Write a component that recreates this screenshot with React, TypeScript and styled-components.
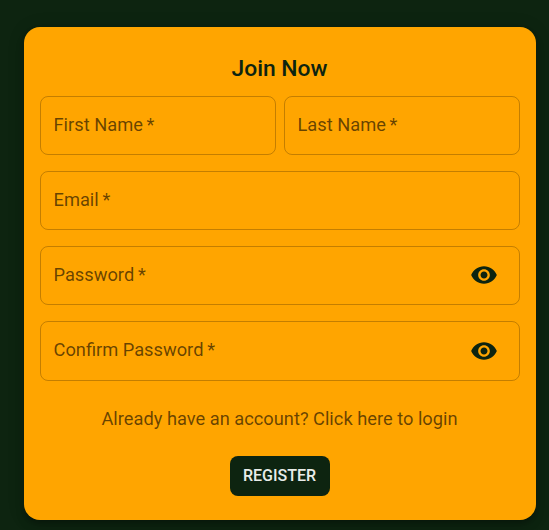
import React from 'react';
import styled, { createGlobalStyle } from 'styled-components';

const GlobalStyle = createGlobalStyle`
  *, *::before, *::after { box-sizing: border-box; }
  html, body { margin: 0; background: #0d2410; }
  body { font-family: Roboto, Helvetica, Arial, sans-serif; overflow: hidden; }
`;

const Page = styled.main`
  display: flex;
  height: 530px;
  padding: 27px 13.5px 10px 23.5px;
`;

const Card = styled.form`
  flex: 1;
  display: flex;
  flex-direction: column;
  align-items: center;
  padding: 23.57px 16px 24px;
  border-radius: 16px;
  background: #ffa500;
  color: #0d2410;
  box-shadow: 0 3px 5px -1px rgba(0, 0, 0, 0.2), 0 6px 10px rgba(0, 0, 0, 0.14),
    0 1px 18px rgba(0, 0, 0, 0.12);
`;

const Title = styled.h1`
  margin: 0 0 8.4px;
  font-size: 1.4286rem;
  font-weight: 500;
  line-height: 1.6;
`;

const Fields = styled.div`
  width: 100%;
  display: grid;
  grid-template-columns: 1fr 1fr;
  gap: 16px 8px;
`;

const FieldBox = styled.label<{ $wide?: boolean }>`
  grid-column: ${({ $wide }) => ($wide ? '1 / -1' : 'auto')};
  height: 59.29px;
  display: flex;
  align-items: center;
  justify-content: space-between;
  padding: 0 20.8px 0 13px;
  border: 1px solid rgba(0, 0, 0, 0.23);
  border-radius: 8px;
  color: rgba(0, 0, 0, 0.6);
  font-size: 1.1429rem;
  line-height: 1.4375;
`;

const LabelText = styled.span`
  margin-bottom: 1px;
`;

const EyeIcon = styled.svg`
  width: 1.75rem;
  height: 1.75rem;
  margin-bottom: 0.6px;
  fill: #0d2410;
`;

const LoginLink = styled.p`
  margin: 24px 0 0;
  color: rgba(0, 0, 0, 0.6);
  font-size: 1.1429rem;
  line-height: 1.5;
`;

const RegisterButton = styled.button`
  width: 100px;
  height: 40px;
  margin-top: 24px;
  padding: 0;
  border: 0;
  border-radius: 8px;
  background: #0d2410;
  color: #e8ece9;
  font: 500 16px/28px Roboto, sans-serif;
  text-transform: uppercase;
`;

interface FieldProps {
  label: string;
  wide?: boolean;
  secret?: boolean;
}

function Field({ label, wide, secret }: FieldProps) {
  return (
    <FieldBox $wide={wide}>
      <LabelText>{label}&thinsp;*</LabelText>
      {secret && (
        <EyeIcon viewBox="0 0 24 24" aria-hidden="true">
          <path d="M12 4.5C7 4.5 2.73 7.61 1 12c1.73 4.39 6 7.5 11 7.5s9.27-3.11 11-7.5c-1.73-4.39-6-7.5-11-7.5M12 17c-2.76 0-5-2.24-5-5s2.24-5 5-5 5 2.24 5 5-2.24 5-5 5m0-8c-1.66 0-3 1.34-3 3s1.34 3 3 3 3-1.34 3-3-1.34-3-3-3" />
        </EyeIcon>
      )}
    </FieldBox>
  );
}

export default function App() {
  return (
    <>
      <GlobalStyle />
      <Page>
        <Card>
          <Title>Join Now</Title>
          <Fields>
            <Field label="First Name" />
            <Field label="Last Name" />
            <Field label="Email" wide />
            <Field label="Password" wide secret />
            <Field label="Confirm Password" wide secret />
          </Fields>
          <LoginLink>Already have an account? Click here to login</LoginLink>
          <RegisterButton type="button">Register</RegisterButton>
        </Card>
      </Page>
    </>
  );
}
